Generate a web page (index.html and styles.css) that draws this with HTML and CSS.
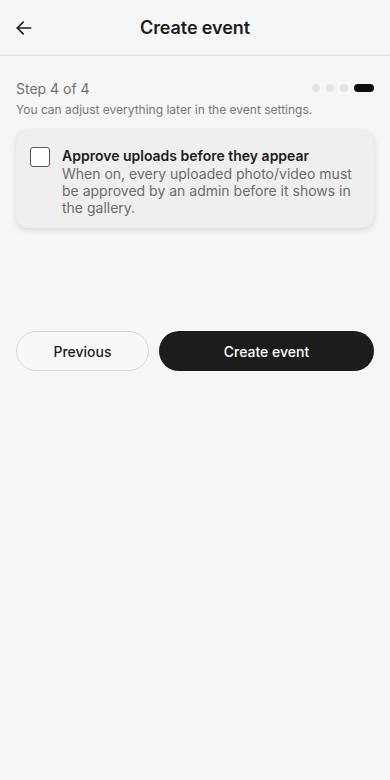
FILE: index.html
```html
<!DOCTYPE html>
<html>
<head>
<meta charset="utf-8">
<link rel="stylesheet" href="styles.css">
</head>
<body>
<header class="topbar">
  <button class="back" aria-label="Back">
    <svg width="20" height="20" viewBox="0 0 24 24" fill="none" stroke="#1c1c1c" stroke-width="2" stroke-linecap="round" stroke-linejoin="round"><path d="M20 12H4"/><path d="M11 5l-7 7 7 7"/></svg>
  </button>
  <h1 class="title">Create event</h1>
</header>
<main class="content">
  <div class="step-row">
    <span class="step">Step 4 of 4</span>
    <div class="dots">
      <span class="dot"></span><span class="dot"></span><span class="dot"></span><span class="dot active"></span>
    </div>
  </div>
  <p class="hint">You can adjust everything later in the event settings.</p>
  <label class="card">
    <span class="checkbox"></span>
    <span class="card-text">
      <span class="card-title">Approve uploads before they appear</span>
      <span class="card-desc">When on, every uploaded photo/video must be approved by an admin before it shows in the gallery.</span>
    </span>
  </label>
  <div class="actions">
    <button class="btn prev">Previous</button>
    <button class="btn primary">Create event</button>
  </div>
</main>
</body>
</html>
```
FILE: styles.css
```css
* { box-sizing: border-box; }
html, body { margin: 0; padding: 0; }
body {
  background: #f6f6f6;
  font-family: Inter, "Noto Sans", sans-serif;
  color: #1c1c1c;
  width: 390px;
  min-height: 780px;
}
.topbar {
  height: 56px;
  border-bottom: 1px solid #e2e2e2;
  display: flex;
  align-items: center;
  justify-content: center;
  position: relative;
}
.back {
  position: absolute;
  left: 14px;
  top: 18px;
  border: 0;
  background: none;
  padding: 0;
  width: 20px;
  height: 20px;
  display: flex;
}
.title {
  margin: 0;
  font-size: 18px;
  font-weight: 600;
  letter-spacing: -0.1px;
}
.content {
  padding: 23px 16px 0;
}
.step-row {
  display: flex;
  align-items: center;
  justify-content: space-between;
  height: 18px;
}
.step {
  font-size: 14px;
  color: #707070;
}
.dots {
  display: flex;
  gap: 6px;
  align-items: center;
}
.dot {
  width: 8px;
  height: 8px;
  border-radius: 4px;
  background: #e4e4e4;
}
.dot.active {
  width: 20px;
  background: #0d0d0d;
}
.hint {
  margin: 5px 0 0;
  font-size: 12px;
  color: #777;
  line-height: 16px;
}
.card {
  margin-top: 12px;
  display: flex;
  gap: 12px;
  padding: 17px 14px 12px;
  background: #efefef;
  border-radius: 12px;
  box-shadow: 0 2px 6px rgba(0,0,0,0.12), 0 0 1px rgba(0,0,0,0.06);
}
.checkbox {
  flex: 0 0 20px;
  width: 20px;
  height: 20px;
  margin-top: 0;
  border: 1px solid #555;
  border-radius: 3px;
  background: #fff;
}
.card-text {
  display: flex;
  flex-direction: column;
}
.card-title {
  font-size: 14px;
  font-weight: 600;
  line-height: 18px;
  color: #1c1c1c;
}
.card-desc {
  font-size: 14px;
  line-height: 17px;
  color: #6c6c6c;
}
.actions {
  margin-top: 103px;
  display: flex;
  gap: 10px;
}
.btn {
  height: 40px;
  border-radius: 20px;
  font-family: inherit;
  font-size: 14px;
  font-weight: 500;
}
.prev {
  flex: 0 0 133px;
  background: #f8f8f8;
  border: 1px solid #d8d8d8;
  color: #1c1c1c;
}
.primary {
  flex: 1;
  background: #1c1c1c;
  border: 0;
  color: #fff;
}
```
